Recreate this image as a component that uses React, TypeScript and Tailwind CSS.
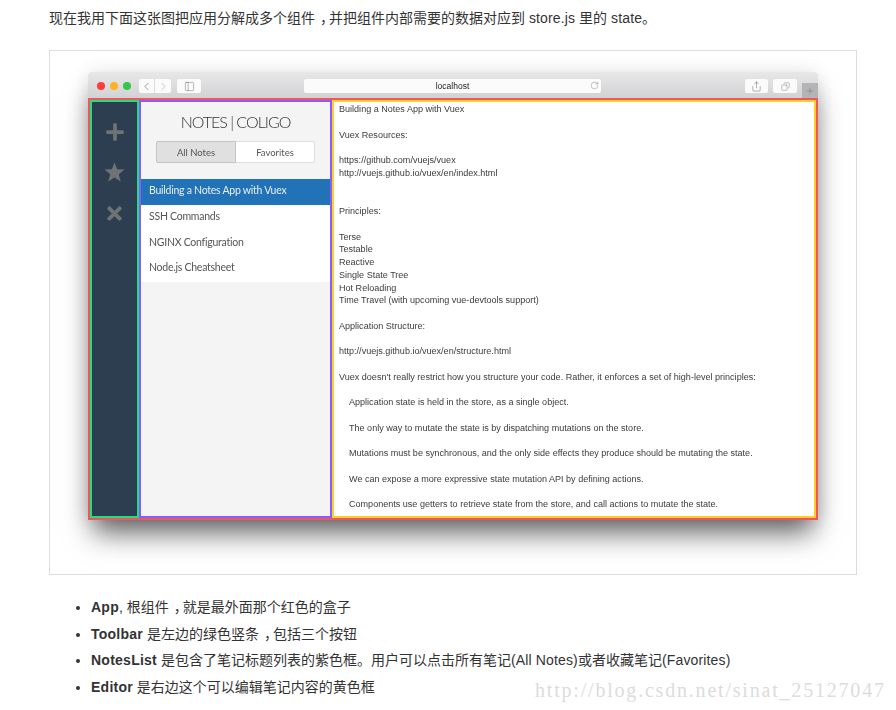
import { ChevronLeft, ChevronRight, Copy, PanelLeft, Plus, RotateCw, Share } from 'lucide-react';
import { FaPlus, FaTimes } from 'react-icons/fa';

const editorLines = [
  'Building a Notes App with Vuex',
  '',
  'Vuex Resources:',
  '',
  'https://github.com/vuejs/vuex',
  'http://vuejs.github.io/vuex/en/index.html',
  '',
  '',
  'Principles:',
  '',
  'Terse',
  'Testable',
  'Reactive',
  'Single State Tree',
  'Hot Reloading',
  'Time Travel (with upcoming vue-devtools support)',
  '',
  'Application Structure:',
  '',
  'http://vuejs.github.io/vuex/en/structure.html',
  '',
  "Vuex doesn't really restrict how you structure your code. Rather, it enforces a set of high-level principles:",
  '',
  '>Application state is held in the store, as a single object.',
  '',
  '>The only way to mutate the state is by dispatching mutations on the store.',
  '',
  '>Mutations must be synchronous, and the only side effects they produce should be mutating the state.',
  '',
  '>We can expose a more expressive state mutation API by defining actions.',
  '',
  '>Components use getters to retrieve state from the store, and call actions to mutate the state.',
];

const notes = ['SSH Commands', 'NGINX Configuration', 'Node.js Cheatsheet'];

// the source page centres its comma in the cell
const Comma = () => <span className="ml-[5px] tracking-[-5px]">，</span>;

const Latin = ({ children }: { children: string }) => <span className="tracking-[0.15px]">{children}</span>;

const App = () => {
  return (
    <div className="relative h-[710px] w-[896px] overflow-hidden bg-white font-['Liberation_Sans','Noto_Sans_CJK_SC',sans-serif] text-[14px] text-[#333]">
      <p className="ml-[49px] h-[28px] pt-[8px] leading-[20px]">
        现在我用下面这张图把应用分解成多个组件
        <Comma />
        并把组件内部需要的数据对应到 <Latin>store.js</Latin> 里的 <Latin>state</Latin>。
      </p>

      {/* figure */}
      <div className="ml-[49px] mt-[22px] h-[525px] w-[808px] border border-[#ddd] pl-[38px] pt-[21px]">
        <div className="flex h-[448px] w-[730px] flex-col rounded-t-[4px] shadow-[0_18px_26px_-5px_rgba(0,0,0,0.6),0_0_20px_rgba(0,0,0,0.1)] blur-[0.3px]">
          {/* browser bar */}
          <header className="flex h-[26px] items-center rounded-t-[4px] bg-gradient-to-b from-[#e9e8e9] to-[#d2d1d3] pl-[9px] pt-[2px]">
            <div className="flex gap-[5px]">
              <span className="h-[8px] w-[8px] rounded-full bg-[#fc3d39]" />
              <span className="h-[8px] w-[8px] rounded-full bg-[#fdb225]" />
              <span className="h-[8px] w-[8px] rounded-full bg-[#33c748]" />
            </div>
            <div className="ml-[8px] flex h-[14px] w-[32px] overflow-hidden rounded-[2px] bg-[#fbfbfb]">
              <span className="flex w-[16px] items-center justify-center border-r border-[#ddd]">
                <ChevronLeft size={13} strokeWidth={1.2} color="#666" />
              </span>
              <span className="flex w-[16px] items-center justify-center">
                <ChevronRight size={13} strokeWidth={1.2} color="#aaa" />
              </span>
            </div>
            <div className="ml-[6px] flex h-[14px] w-[24px] items-center justify-center rounded-[2px] bg-[#fbfbfb]">
              <PanelLeft size={11} strokeWidth={1} color="#666" />
            </div>
            <div className="relative ml-[103px] flex h-[14px] w-[297px] items-center justify-center rounded-[2px] bg-[#fbfbfb] pt-[1px] text-[8.5px] text-[#222]">
              localhost
              <RotateCw size={9} strokeWidth={1} color="#666" className="absolute right-[2px] top-[2px]" />
            </div>
            <div className="ml-[144px] flex h-[14px] w-[23px] items-center justify-center rounded-[2px] bg-[#fbfbfb]">
              <Share size={11} strokeWidth={1} color="#555" />
            </div>
            <div className="ml-[5px] flex h-[14px] w-[24px] items-center justify-center rounded-[2px] bg-[#fbfbfb]">
              <Copy size={9} strokeWidth={1} color="#555" className="-scale-x-100" />
            </div>
            <div className="ml-[5px] flex h-[15px] w-[16px] items-center justify-center self-end bg-[#b4b4b6]">
              <Plus size={10} strokeWidth={1} color="#666" />
            </div>
          </header>

          {/* app, red box */}
          <div className="flex min-h-0 flex-1 border-2 border-[#f0565e] bg-white">
            {/* toolbar, green box */}
            <div className="flex w-[49px] flex-col items-center gap-[20px] border-2 border-[#1fdf80] bg-[#2c3e4f] pt-[20px] text-[#6e7376]">
              <FaPlus size={20} />
              <svg width="21" height="20" viewBox="0 0 21 20" fill="currentColor">
                <polygon points="10.5,0.5 13.2,7.2 20.5,7.6 14.8,12.2 16.7,19.5 10.5,15.4 4.3,19.5 6.2,12.2 0.5,7.6 7.8,7.2" />
              </svg>
              <FaTimes size={21} className="mt-[1px]" />
            </div>

            {/* notes list, purple box */}
            <div className="flex w-[193px] flex-col border-2 border-[#8a5cff] bg-[#f4f4f4] font-['Lato',sans-serif] text-[#555]">
              <h1 className="mt-[10px] text-center text-[16px] font-light leading-[20px] tracking-[-1px] text-[#333]">
                NOTES | COLIGO
              </h1>
              <div className="mx-[15px] mt-[9px] flex h-[22px] text-[9.5px] leading-[21px]">
                <span className="w-[80px] rounded-l-[2px] border border-[#c4c4c4] bg-[#e0e0e0] text-center">
                  All Notes
                </span>
                <span className="flex-1 rounded-r-[2px] border border-l-0 border-[#ddd] bg-white text-center">
                  Favorites
                </span>
              </div>
              <ul className="mt-[16px] bg-white text-[10.5px] leading-[23.5px] tracking-[-0.25px]">
                <li className="h-[26px] bg-[#2272b8] pl-[8px] text-[#e8eef5]">Building a Notes App with Vuex</li>
                {notes.map((note) => (
                  <li key={note} className="h-[25.5px] pl-[8px]">
                    {note}
                  </li>
                ))}
              </ul>
            </div>

            {/* editor, yellow box */}
            <div className="flex-1 border-2 border-[#ffcf26] pl-[5px] pt-[1px] text-[9.05px] leading-[12.75px] text-[#3c3c3c]">
              {editorLines.map((line, i) => (
                <div key={i} className={line.startsWith('>') ? 'h-[12.75px] whitespace-nowrap pl-[10px]' : 'h-[12.75px] whitespace-nowrap'}>
                  {line.replace('>', '')}
                </div>
              ))}
            </div>
          </div>
        </div>
      </div>

      <ul className="mt-[19px] flex list-disc flex-col pl-[91px] leading-[26.5px] marker:text-[#333]">
        <li className="h-[26.5px]">
          <b className="tracking-[0.25px]">App</b>, 根组件
          <Comma />
          就是最外面那个红色的盒子
        </li>
        <li className="h-[26.5px]">
          <b className="tracking-[0.25px]">Toolbar</b> 是左边的绿色竖条
          <Comma />
          包括三个按钮
        </li>
        <li className="h-[26.5px]">
          <b className="tracking-[0.25px]">NotesList</b> 是包含了笔记标题列表的紫色框。用户可以点击所有笔记
          <Latin>(All Notes)</Latin>或者收藏笔记<Latin>(Favorites)</Latin>
        </li>
        <li className="h-[26.5px]">
          <b className="tracking-[0.25px]">Editor</b> 是右边这个可以编辑笔记内容的黄色框
        </li>
      </ul>

      {/* watermark */}
      <span className="absolute left-[535px] top-[678px] font-['Liberation_Serif',serif] text-[20px] leading-[24px] tracking-[1.8px] text-[#dcdcdc]">
        http://blog.csdn.net/sinat_25127047
      </span>
    </div>
  );
};

export default App;
